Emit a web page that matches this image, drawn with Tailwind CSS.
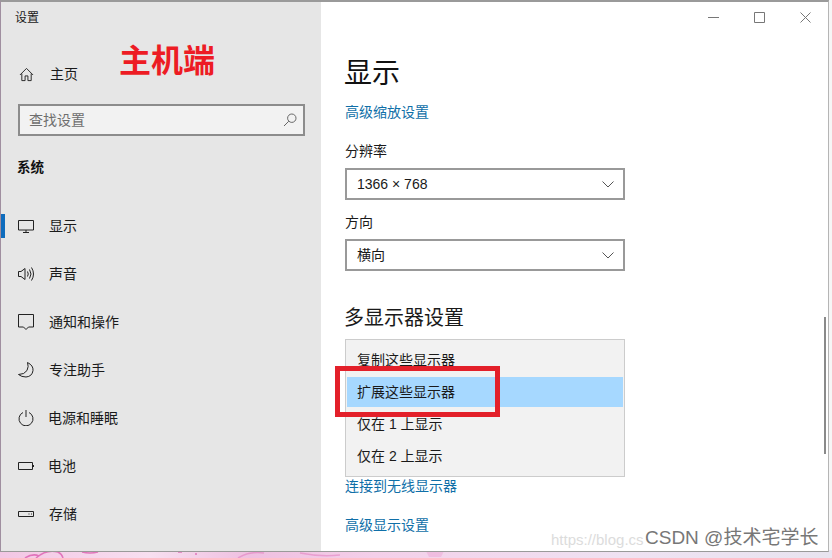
<!doctype html>
<html lang="zh">
<head>
<meta charset="utf-8">
<script src="https://cdn.jsdelivr.net/npm/@tailwindcss/browser@4"></script>
</head>
<body class="m-0 bg-white">
<div class="relative w-[832px] h-[558px] overflow-hidden bg-[#f3dcec] font-['Liberation_Sans','Noto_Sans_CJK_SC',sans-serif] text-[14px] text-[#1a1a1a]">
  <!-- wallpaper at the bottom -->
  <div class="absolute left-0 right-0 bottom-0 h-[8px] bg-[linear-gradient(90deg,#f3c6e4,#f8dff0_18%,#efbfe0_30%,#f4cfe9_45%,#f2d6ec_55%,#efe2f2_75%,#e8e4f0)]">
    <svg class="w-[832px] h-[8px]" viewBox="0 0 832 8" fill="none" stroke="#d94fa8" stroke-width="1.500"><path d="M25 8q8-5 14-2M36 8q10-9 22-6 4 2 5 6M82 2q8 2 16 0M178 2h4M195 4h2" opacity=".7"/><path d="M238 8q12-7 26-5M300 3q20 4 40 2" opacity=".35"/><path d="M426 1h18l-3 6h-12z" fill="#eeb4dc" stroke="none" opacity=".7"/></svg>
  </div>
  <div class="absolute right-0 top-0 bottom-[8px] w-[4px] bg-[#f6f6f6]"></div>

  <!-- window -->
  <div class="absolute left-0 top-0 w-[829px] h-[552px] flex border-t-2 border-l border-r border-b border-t-[#9a9a9a] border-l-[#a08fa0] border-r-[#b5b5b5] border-b-[#9a9a9a] bg-white">
    <!-- sidebar -->
    <div class="w-[320px] h-full bg-[#e6e6e6] flex flex-col shrink-0">
      <div class="h-[32px] pl-[14px] flex items-center text-[12px]">设置</div>
      <div class="h-[48px] mt-[16px] pl-[18px] flex items-center">
        <svg class="w-[15px] h-[15px] shrink-0" viewBox="0 0 16 16" fill="none" stroke="#222" stroke-width="1"><path d="M1 8.500 8 1.500l7 7M3 7v7.500h3.500V9.500h3v5H13V7"/></svg>
        <span class="ml-[16px]">主页</span>
      </div>
      <div class="mt-[6px] ml-[17px] w-[287px] h-[32px] border-2 border-[#8c8c8c] bg-[#f2f2f2] flex items-center justify-between pl-[9px] pr-[6px] text-[#6e6e6e]">
        <span>查找设置</span>
        <svg class="w-[14px] h-[14px]" viewBox="0 0 14 14" fill="none" stroke="#666" stroke-width="1"><circle cx="8.800" cy="5.200" r="4.200"/><path d="M5.800 8.200 1 13"/></svg>
      </div>
      <div class="mt-[20px] ml-[16px] h-[24px] flex items-center font-bold text-[13.500px] text-[#111]">系统</div>
      <div class="mt-[22px] flex flex-col">
        <div class="relative h-[48px] flex items-center pl-[17px]">
          <div class="absolute left-0 top-[12px] w-[4px] h-[24px] bg-[#0f6cbd]"></div>
          <svg class="w-[16px] h-[16px] shrink-0" viewBox="0 0 16 16" fill="none" stroke="#222" stroke-width="1"><path d="M.500 2.500h15v9.500H.500zM8 12v2.500M5 14.500h6"/></svg>
          <span class="ml-[15px]">显示</span>
        </div>
        <div class="h-[48px] flex items-center pl-[17px]">
          <svg class="w-[16px] h-[16px] shrink-0" viewBox="0 0 16 16" fill="none" stroke="#222" stroke-width="1"><path d="M.500 5.500h2.500L7 2.500v11l-4-3H.500zM9.500 5.500q1.500 2.500 0 5M11.500 3.500q3 4.500 0 9M13.500 1.500q4 6.500 0 13"/></svg>
          <span class="ml-[15px]">声音</span>
        </div>
        <div class="h-[48px] flex items-center pl-[17px]">
          <svg class="w-[16px] h-[16px] shrink-0" viewBox="0 0 16 16" fill="none" stroke="#222" stroke-width="1"><path d="M.500.500h15v12.500h-5L8 15.500 5.500 13h-5z"/></svg>
          <span class="ml-[15px]">通知和操作</span>
        </div>
        <div class="h-[48px] flex items-center pl-[17px]">
          <svg class="w-[16px] h-[16px] shrink-0" viewBox="0 0 16 16" fill="none" stroke="#222" stroke-width="1"><path d="M9.500.500q6 3 5.500 8-.800 6-7 6.500-4.500 0-7.500-2.500 6 0 8.500-4 2-4 .500-8z"/></svg>
          <span class="ml-[15px]">专注助手</span>
        </div>
        <div class="h-[48px] flex items-center pl-[17px]">
          <svg class="w-[16px] h-[16px] shrink-0" viewBox="0 0 16 16" fill="none" stroke="#222" stroke-width="1"><path d="M5 2.500a7 7 0 1 0 6 0M8 0v7"/></svg>
          <span class="ml-[14px]">电源和睡眠</span>
        </div>
        <div class="h-[48px] flex items-center pl-[17px]">
          <svg class="w-[16px] h-[16px] shrink-0" viewBox="0 0 16 16" fill="none" stroke="#222" stroke-width="1"><path d="M.500 4.500h14v7H.500z"/><path d="M15.500 7v2" stroke-width="1.500"/></svg>
          <span class="ml-[14px]">电池</span>
        </div>
        <div class="h-[48px] flex items-center pl-[17px]">
          <svg class="w-[16px] h-[16px] shrink-0" viewBox="0 0 16 16" fill="none" stroke="#222" stroke-width="1"><path d="M.500 5.500h15v5H.500zM10.500 8h1M13 8h1"/></svg>
          <span class="ml-[15px]">存储</span>
        </div>
      </div>
    </div>

    <!-- main pane -->
    <div class="relative flex-1 flex flex-col pl-[24px]">
      <div class="absolute right-0 top-0 h-[30px] flex items-center">
        <div class="w-[46px] flex justify-center"><svg class="w-[11px] h-[11px]" viewBox="0 0 11 11" fill="none" stroke="#777"><path d="M0 5.500h11"/></svg></div>
        <div class="w-[46px] flex justify-center"><svg class="w-[11px] h-[11px]" viewBox="0 0 11 11" fill="none" stroke="#777"><path d="M.500.500h10v10H.500z"/></svg></div>
        <div class="w-[46px] flex justify-center"><svg class="w-[11px] h-[11px]" viewBox="0 0 11 11" fill="none" stroke="#777"><path d="m.500.500 10 10M10.500.500l-10 10"/></svg></div>
      </div>
      <div class="mt-[52px] -ml-[1px] h-[40px] flex items-center text-[28px] leading-none text-[#111]">显示</div>
      <div class="mt-[8px] h-[20px] flex items-center text-[#0f6fa8]">高级缩放设置</div>
      <div class="mt-[19px] h-[20px] flex items-center">分辨率</div>
      <div class="mt-[7px] w-[280px] h-[32px] border-2 border-[#999] flex items-center justify-between pl-[10px] pr-[9px]">
        <span>1366 × 768</span>
        <svg class="w-[12px] h-[7px]" viewBox="0 0 12 7" fill="none" stroke="#555"><path d="m.500.500 5.500 5.500 5.500-5.500"/></svg>
      </div>
      <div class="mt-[12px] h-[20px] flex items-center">方向</div>
      <div class="mt-[7px] w-[280px] h-[32px] border-2 border-[#999] flex items-center justify-between pl-[10px] pr-[9px]">
        <span>横向</span>
        <svg class="w-[12px] h-[7px]" viewBox="0 0 12 7" fill="none" stroke="#555"><path d="m.500.500 5.500 5.500 5.500-5.500"/></svg>
      </div>
      <div class="mt-[33px] -ml-[1px] h-[28px] flex items-center text-[20px] leading-none">多显示器设置</div>
      <div class="mt-[7px] w-[280px] h-[138px] border border-[#ccc] bg-[#f2f2f2] flex flex-col pt-[4px] px-[1px]">
        <div class="h-[32px] shrink-0 flex items-center pl-[10px]">复制这些显示器</div>
        <div class="h-[30px] my-[1px] shrink-0 flex items-center pl-[10px] bg-[#a6d8ff]">扩展这些显示器</div>
        <div class="h-[32px] shrink-0 flex items-center pl-[10px]">仅在 1 上显示</div>
        <div class="h-[32px] shrink-0 flex items-center pl-[10px]">仅在 2 上显示</div>
      </div>
      <div class="-mt-[1px] h-[20px] flex items-center text-[#0f6fa8]">连接到无线显示器</div>
      <div class="mt-[19px] h-[20px] flex items-center text-[#0f6fa8]">高级显示设置</div>
      <!-- scrollbar -->
      <div class="absolute right-[2px] top-[315px] w-[2px] h-[137px] bg-[#8a8a8a]"></div>
    </div>
  </div>

  <!-- annotations on top of the screenshot -->
  <div class="absolute left-[119px] top-[38px] text-[32px] leading-[40px] font-bold text-[#ed1c24] font-['Noto_Sans_CJK_SC',sans-serif]">主机端</div>
  <div class="absolute left-[335px] top-[366px] w-[165px] h-[51px] border-[5px] border-[#e3202a]"></div>
  <div class="absolute left-[551px] top-[530px] text-[15px] leading-[20px] text-[#dcdcdc]">https://blog.cs</div>
  <div class="absolute left-[645px] top-[526px] text-[19px] leading-[24px] text-[#777] whitespace-nowrap">CSDN @技术宅学长</div>
</div>
</body>
</html>
